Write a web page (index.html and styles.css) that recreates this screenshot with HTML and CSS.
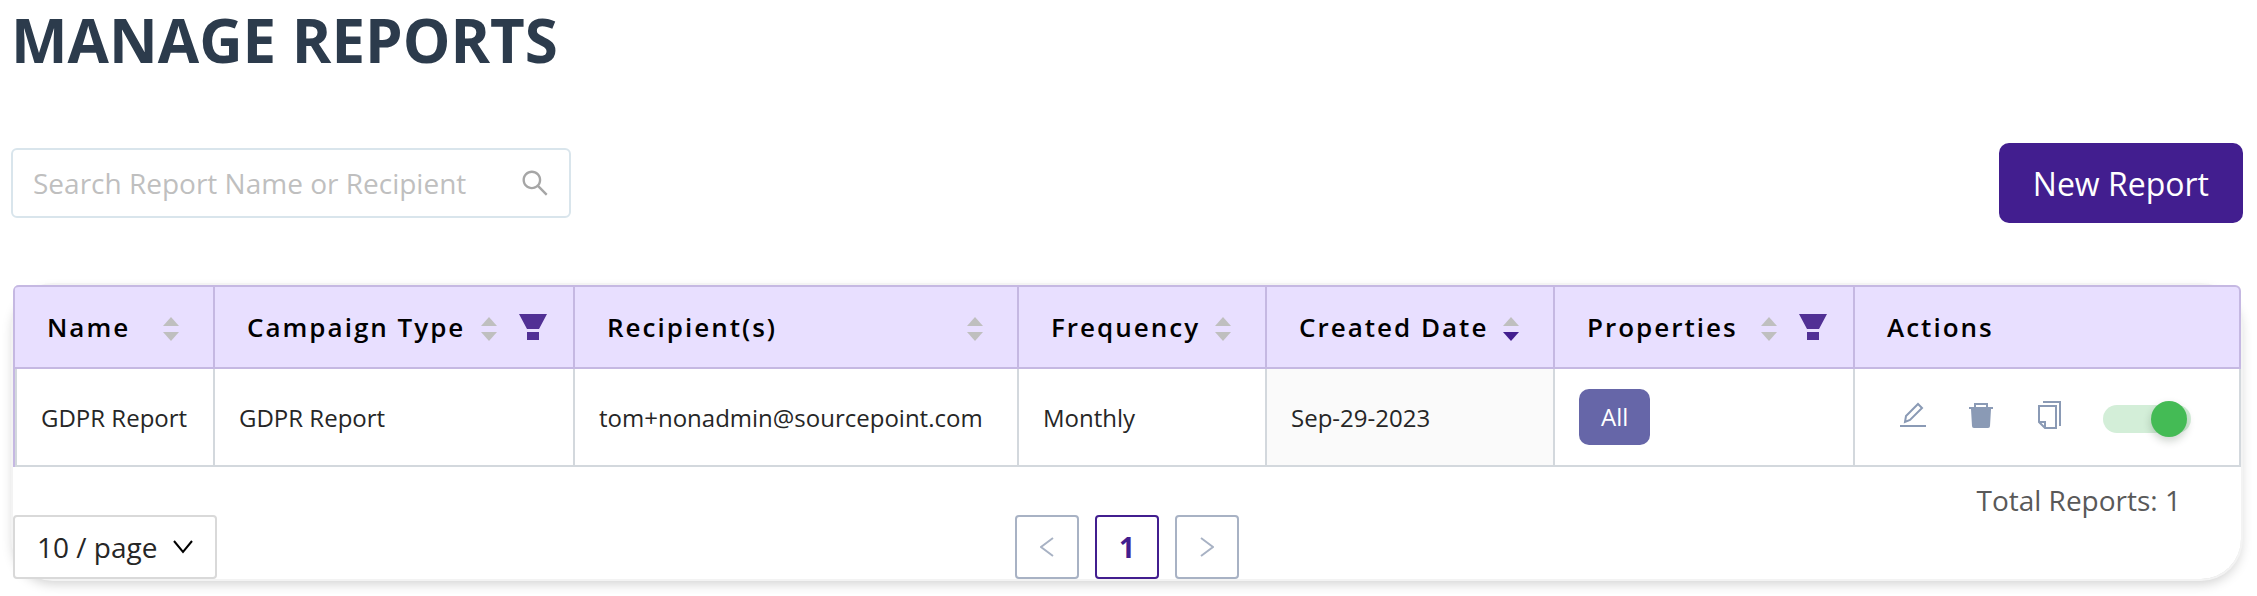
FILE: index.html
```
<!DOCTYPE html>
<html lang="en">
<head>
    <meta charset="UTF-8">
    <meta name="viewport" content="width=device-width, initial-scale=1.0">
    <title>Manage Reports</title>
    <link rel="stylesheet" href="styles.css">
</head>
<body>
    <main class="page">
        <h1>Manage Reports</h1>

        <div class="toolbar">
            <label class="search">
                <input type="text" placeholder="Search Report Name or Recipient" aria-label="Search reports">
                <svg class="search-icon" viewBox="64 64 896 896" fill="currentColor"><path d="M909.6 854.5L649.9 594.8C690.2 542.7 712 479 712 412c0-80.2-31.3-155.4-87.9-212.1-56.6-56.7-132-87.9-212.1-87.9s-155.5 31.3-212.1 87.9C143.2 256.5 112 331.8 112 412c0 80.1 31.3 155.5 87.9 212.1C256.5 680.8 331.8 712 412 712c67 0 130.6-21.8 182.7-62l259.7 259.6a8.2 8.2 0 0 0 11.6 0l43.6-43.5a8.2 8.2 0 0 0 0-11.6zM570.4 570.4C528 612.7 471.8 636 412 636s-116-23.3-158.4-65.6C211.3 528 188 471.8 188 412s23.3-116.1 65.6-158.4C296 211.3 352.2 188 412 188s116.1 23.2 158.4 65.6S636 352.2 636 412s-23.3 116.1-65.6 158.4z"/></svg>
            </label>
            <button class="new-report" type="button">New Report</button>
        </div>

        <section class="card">
            <table>
                <colgroup>
                    <col class="col-name">
                    <col class="col-campaign">
                    <col class="col-recipients">
                    <col class="col-frequency">
                    <col class="col-created">
                    <col class="col-properties">
                    <col class="col-actions">
                </colgroup>
                <thead>
                    <tr>
                        <th scope="col">
                            <div class="head">Name
                                <svg class="sorter" viewBox="0 0 16 24"><path class="up" d="M8 0l8 9H0z"/><path class="down" d="M0 15h16l-8 9z"/></svg>
                            </div>
                        </th>
                        <th scope="col">
                            <div class="head">Campaign Type
                                <svg class="sorter" viewBox="0 0 16 24"><path class="up" d="M8 0l8 9H0z"/><path class="down" d="M0 15h16l-8 9z"/></svg>
                                <svg class="filter" viewBox="0 0 28 26"><path d="M0 0h28l-8 15H8zM8 18h12v8H8z"/></svg>
                            </div>
                        </th>
                        <th scope="col">
                            <div class="head">Recipient(s)
                                <svg class="sorter" viewBox="0 0 16 24"><path class="up" d="M8 0l8 9H0z"/><path class="down" d="M0 15h16l-8 9z"/></svg>
                            </div>
                        </th>
                        <th scope="col">
                            <div class="head">Frequency
                                <svg class="sorter" viewBox="0 0 16 24"><path class="up" d="M8 0l8 9H0z"/><path class="down" d="M0 15h16l-8 9z"/></svg>
                            </div>
                        </th>
                        <th scope="col" aria-sort="descending">
                            <div class="head">Created Date
                                <svg class="sorter desc" viewBox="0 0 16 24"><path class="up" d="M8 0l8 9H0z"/><path class="down" d="M0 15h16l-8 9z"/></svg>
                            </div>
                        </th>
                        <th scope="col">
                            <div class="head">Properties
                                <svg class="sorter" viewBox="0 0 16 24"><path class="up" d="M8 0l8 9H0z"/><path class="down" d="M0 15h16l-8 9z"/></svg>
                                <svg class="filter" viewBox="0 0 28 26"><path d="M0 0h28l-8 15H8zM8 18h12v8H8z"/></svg>
                            </div>
                        </th>
                        <th scope="col">
                            <div class="head">Actions</div>
                        </th>
                    </tr>
                </thead>
                <tbody>
                    <tr>
                        <td>GDPR Report</td>
                        <td>GDPR Report</td>
                        <td>tom+nonadmin@sourcepoint.com</td>
                        <td>Monthly</td>
                        <td class="sorted">Sep-29-2023</td>
                        <td><span class="tag">All</span></td>
                        <td>
                            <div class="actions">
                                <button class="icon-button" type="button" aria-label="Edit">
                                    <svg viewBox="0 0 28 28"><path d="M6 21l1-6L19 3l4 4-12 12z" fill="none" stroke="currentColor" stroke-width="2"/><path d="M1 24h26v2H1z" fill="currentColor"/></svg>
                                </button>
                                <button class="icon-button" type="button" aria-label="Delete">
                                    <svg viewBox="0 0 28 28"><path d="M8 7V3h12v4" fill="none" stroke="currentColor" stroke-width="2"/><path d="M2 6h24v2h-2l-1 17q0 2-2 2H7q-2 0-2-2L4 8H2z" fill="currentColor"/></svg>
                                </button>
                                <button class="icon-button" type="button" aria-label="Duplicate">
                                    <svg viewBox="0 0 28 28"><path d="M8 1h17v24M4 5h17v22H10l-6-6zM4 21h6v6" fill="none" stroke="currentColor" stroke-width="2"/></svg>
                                </button>
                                <input class="switch" type="checkbox" role="switch" aria-label="Report enabled" checked>
                            </div>
                        </td>
                    </tr>
                </tbody>
            </table>

            <p class="total">Total Reports: 1</p>

            <div class="footer">
                <div class="page-size">
                    <select aria-label="Page size">
                        <option>10 / page</option>
                        <option>20 / page</option>
                    </select>
                    <svg class="arrow" viewBox="0 0 20 14"><path d="M1 1l9 11 9-11" fill="none" stroke="currentColor" stroke-width="2"/></svg>
                </div>
                <nav class="pagination" aria-label="Pages">
                    <button type="button" aria-label="Previous page"><svg viewBox="0 0 14 20"><path d="M13 1L1 10l12 9" fill="none" stroke="currentColor" stroke-width="2"/></svg></button>
                    <button class="current" type="button">1</button>
                    <button type="button" aria-label="Next page"><svg viewBox="0 0 14 20"><path d="M1 1l12 9-12 9" fill="none" stroke="currentColor" stroke-width="2"/></svg></button>
                </nav>
            </div>
        </section>
    </main>
</body>
</html>
```
FILE: styles.css
```
* {
    box-sizing: border-box;
}

body {
    background-color: #ffffff;
    color: #262626;
    font-family: "Open Sans", "Noto Sans", sans-serif;
    font-size: 24px;
    margin: 0;
}

button, input, select {
    font-family: inherit;
}

button {
    cursor: pointer;
}

.page {
    padding: 0 14px 15px 11px;
}

h1 {
    color: #2c3b4c;
    font-size: 60px;
    font-weight: 700;
    line-height: 80px;
    margin: 0 0 63px;
    text-transform: uppercase;
}

.toolbar {
    display: flex;
    align-items: center;
    justify-content: space-between;
    margin-bottom: 62px;
}

.search {
    display: flex;
    align-items: center;
    width: 560px;
    height: 70px;
    padding: 0 20px;
    border: 2px solid #d9e5ec;
    border-radius: 6px;
}

.search input {
    flex: 1;
    min-width: 0;
    padding: 0;
    border: none;
    outline: none;
    background: none;
    font-size: 28px;
}

.search input::placeholder {
    color: #bfbfbf;
    opacity: 1;
}

.search-icon {
    width: 28px;
    height: 28px;
    color: #a6a6a6;
}

.new-report {
    height: 80px;
    padding: 0 34px;
    border: none;
    border-radius: 10px;
    background-color: #421e8f;
    color: #ffffff;
    font-size: 32px;
}

.card {
    margin: 0 2px;
    border-radius: 40px;
    box-shadow: 0 0 0 2px #f3f3f3, 0 5px 12px rgba(0, 0, 0, 0.18);
}

table {
    width: 100%;
    table-layout: fixed;
    border-collapse: separate;
    border-spacing: 0;
    border-left: 2px solid #c5b8e2;
    border-top-left-radius: 6px;
}

.col-name { width: 200px; }
.col-campaign { width: 360px; }
.col-recipients { width: 444px; }
.col-frequency { width: 248px; }
.col-created { width: 288px; }
.col-properties { width: 300px; }

th {
    height: 84px;
    padding: 0 26px 0 32px;
    border: solid #c5b8e2;
    border-width: 2px 2px 2px 0;
    background-color: #e8dfff;
    color: #000000;
    font-size: 26px;
    font-weight: 600;
    letter-spacing: 2px;
    text-align: left;
    white-space: nowrap;
}

th:first-child {
    border-top-left-radius: 4px;
}

th:last-child {
    border-top-right-radius: 6px;
}

.head {
    display: flex;
    align-items: center;
}

.sorter {
    width: 16px;
    height: 24px;
    margin: 4px 8px 0 auto;
    fill: #bfbfbf;
}

.sorter.desc .down {
    fill: #421e8f;
}

.filter {
    width: 28px;
    height: 26px;
    margin-left: 14px;
    fill: #513095;
}

td {
    height: 98px;
    padding: 0 24px;
    border: solid #d3d8dd;
    border-width: 0 2px 2px 0;
    white-space: nowrap;
}

td:first-child {
    border-left-width: 2px;
}

.sorted {
    background-color: #fafafa;
}

.tag {
    display: inline-block;
    padding: 0 22px;
    border-radius: 10px;
    background-color: #6666a8;
    color: #ffffff;
    line-height: 56px;
}

.actions {
    display: flex;
    align-items: center;
    padding-left: 20px;
}

.icon-button {
    width: 28px;
    height: 28px;
    margin: 0 40px 4px 0;
    padding: 0;
    border: none;
    background: none;
    color: #8a9ab5;
}

.icon-button svg {
    display: block;
}

.switch {
    appearance: none;
    position: relative;
    width: 88px;
    height: 28px;
    margin: 4px 0 0;
    border-radius: 14px;
    background-color: #d3eed8;
    cursor: pointer;
}

.switch::after {
    content: "";
    position: absolute;
    top: -4px;
    right: 4px;
    width: 36px;
    height: 36px;
    border-radius: 50%;
    background-color: #44bb55;
    box-shadow: 0 4px 8px rgba(0, 35, 11, 0.2);
}

.total {
    margin: 0;
    padding: 18px 60px 0 0;
    color: #595959;
    font-size: 28px;
    line-height: 30px;
    text-align: right;
}

.footer {
    display: grid;
    grid-template-columns: 1fr auto 1fr;
    align-items: center;
}

.page-size {
    position: relative;
    width: 204px;
}

.page-size select {
    appearance: none;
    width: 100%;
    height: 64px;
    padding: 0 22px;
    border: 2px solid #d9d9d9;
    border-radius: 4px;
    background-color: #ffffff;
    color: #262626;
    font-size: 28px;
}

.page-size .arrow {
    position: absolute;
    top: 24px;
    right: 24px;
    width: 20px;
    height: 16px;
    color: #000000;
    pointer-events: none;
}

.pagination {
    display: flex;
    gap: 16px;
}

.pagination button {
    display: flex;
    align-items: center;
    justify-content: center;
    width: 64px;
    height: 64px;
    padding: 0;
    border: 2px solid #a8b2c4;
    border-radius: 4px;
    background-color: #ffffff;
    color: #a8b2c4;
    font-size: 28px;
}

.pagination svg {
    width: 14px;
    height: 20px;
}

.pagination .current {
    border-color: #421e8f;
    color: #421e8f;
    font-weight: 700;
}
```
